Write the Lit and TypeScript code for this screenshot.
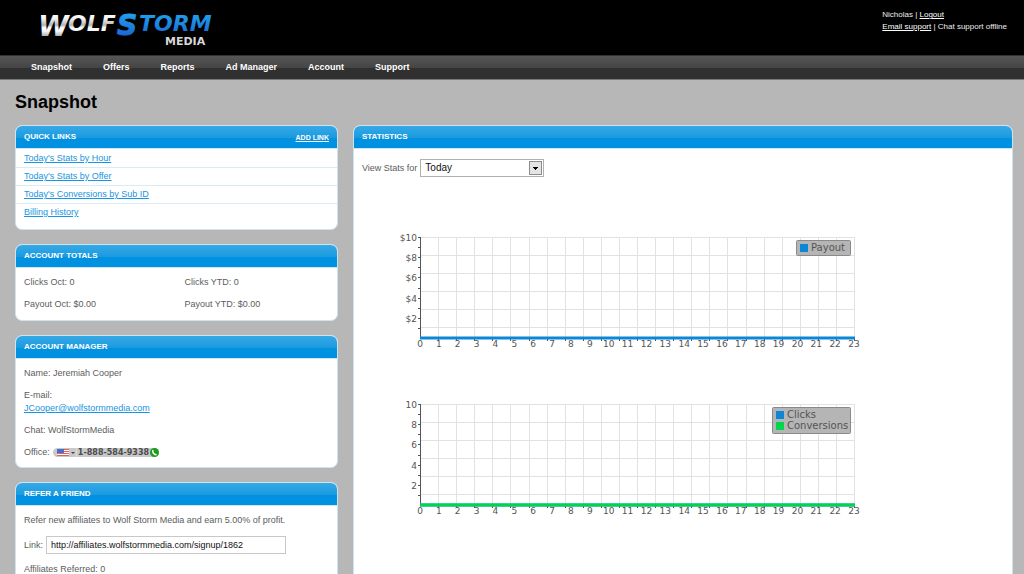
import { LitElement, html, svg, css } from "lit";
import { customElement, property } from "lit/decorators.js";

interface Series {
  name: string;
  color: string;
}

@customElement("brand-logo")
class BrandLogo extends LitElement {
  static styles = css`
    :host { display: block; }
    svg { display: block; }
    text { font-family: "DejaVu Sans", sans-serif; font-weight: bold; }
    .slant { font-style: italic; }
    .large { font-size: 28px; }
    .small { font-size: 22px; }
    .media { font-size: 11px; }
  `;

  render() {
    return html`
      <svg width="180" height="40" viewBox="0 0 180 40" role="img" aria-label="WolfStorm Media">
        <defs>
          <linearGradient id="silver" gradientUnits="userSpaceOnUse" x1="0" y1="5" x2="0" y2="28">
            <stop offset="0" stop-color="#ffffff" />
            <stop offset="0.2" stop-color="#f4f4f4" />
            <stop offset="0.48" stop-color="#b4b4b4" />
            <stop offset="0.6" stop-color="#ffffff" />
            <stop offset="0.75" stop-color="#f4f4f4" />
            <stop offset="1" stop-color="#a0a0a0" />
          </linearGradient>
          <linearGradient id="blue" gradientUnits="userSpaceOnUse" x1="0" y1="5" x2="0" y2="28">
            <stop offset="0" stop-color="#1fa0ee" />
            <stop offset="1" stop-color="#1b64d0" />
          </linearGradient>
        </defs>
        <text class="slant large" x="1" y="27" fill="url(#silver)">W</text>
        <text class="slant small" x="31" y="22" fill="url(#silver)">OLF</text>
        <text class="slant large" x="80" y="26" fill="url(#blue)" stroke="url(#blue)">S</text>
        <text class="slant small" x="102" y="22" fill="url(#blue)">TORM</text>
        <text class="media" x="128" y="36" fill="#d8d8d8">MEDIA</text>
      </svg>
    `;
  }
}

@customElement("panel-card")
class PanelCard extends LitElement {
  @property() heading = "";

  static styles = css`
    :host {
      display: block;
      box-sizing: border-box;
      border: 1px solid #cfe3ee;
      border-radius: 7px;
      background: #fff;
      overflow: hidden;
    }
    header {
      display: flex;
      align-items: center;
      justify-content: space-between;
      height: 22px;
      padding: 0 8px;
      border-bottom: 1px solid #cfe6f3;
      background: linear-gradient(#36a9e6 0, #1b9ae0 54%, #0091e0 55%, #0091e0 100%);
      color: #fff;
    }
    h2 { margin: 0; font-size: 8px; line-height: 12px; text-transform: uppercase; }
  `;

  render() {
    return html`
      <header><h2>${this.heading}</h2><slot name="action"></slot></header>
      <slot></slot>
    `;
  }
}

@customElement("line-chart")
class LineChart extends LitElement {
  @property() prefix = "";
  @property({ attribute: false }) series: Series[] = [];
  @property({ type: Number }) legendWidth = 54;

  static styles = css`
    :host { display: block; }
    svg { display: block; }
    text { font-family: "DejaVu Sans", Verdana, sans-serif; font-size: 9px; fill: #545454; }
    .name { font-size: 10px; }
    .grid { stroke: #e2e2e2; stroke-width: 1; }
    .axis { stroke: #545454; stroke-width: 1; }
    .line { stroke-width: 3; }
    .legend { fill: #b5b5b5; stroke: #8a8a8a; }
  `;

  render() {
    const left = 30;
    const top = 10;
    const width = 434;
    const height = 101;
    const bottom = top + height;
    const columns = Array.from({ length: 24 }, (_, i) => Math.round(left + (i + 1) * (width / 24)) + 0.5);
    const rows = Array.from({ length: 6 }, (_, i) => top + i * 18 + 0.5);
    const ticks = Array.from({ length: 10 }, (_, i) => Math.round(top + (i * height) / 10) + 0.5);
    const hours = Array.from({ length: 24 }, (_, i) => i);
    const legendHeight = this.series.length * 11 + 4;
    const legendLeft = left + width - 3 - this.legendWidth;
    return html`
      <svg width="480" height="130" viewBox="0 0 480 130" role="img" aria-label="Hourly chart">
        ${rows.map((y) => svg`<line class="grid" x1=${left} x2=${left + width} y1=${y} y2=${y} />`)}
        ${columns.map((x) => svg`<line class="grid" x1=${x} x2=${x} y1=${top} y2=${bottom} />`)}
        ${columns.map((x) => svg`<line class="axis" x1=${x} x2=${x} y1=${bottom} y2=${bottom + 3} />`)}
        <line class="axis" x1=${left + 0.5} x2=${left + 0.5} y1=${top} y2=${bottom} />
        ${ticks.map((y) => svg`<line class="axis" x1=${left - 2} x2=${left} y1=${y} y2=${y} />`)}
        ${[10, 8, 6, 4, 2].map(
          (v) => svg`<text text-anchor="end" x=${left - 3} y=${Math.round(bottom - (v * height) / 10) + 4}>${this.prefix}${v}</text>`
        )}
        ${hours.map(
          (h) => svg`<text text-anchor="middle" x=${left + (h * width) / 23} y=${bottom + 9}>${h}</text>`
        )}
        ${this.series.map(
          (s) => svg`<line class="line" stroke=${s.color} x1=${left} x2=${left + width + 1} y1=${bottom} y2=${bottom} />`
        )}
        <rect class="legend" x=${legendLeft + 0.5} y=${top + 3.5} width=${this.legendWidth - 1} height=${legendHeight} rx="1" />
        ${this.series.map(
          (s, i) => svg`
            <rect x=${legendLeft + 4} y=${top + 7 + i * 11} width="8" height="8" fill=${s.color} />
            <text class="name" x=${legendLeft + 15} y=${top + 14 + i * 11}>${s.name}</text>`
        )}
      </svg>
    `;
  }
}

@customElement("app-root")
class AppRoot extends LitElement {
  static styles = css`
    :host {
      display: block;
      height: 100vh;
      overflow: auto;
      scrollbar-width: none;
      background: #b7b7b7;
      color: #5c5c5c;
      font: 9px/13px "Liberation Sans", Arial, sans-serif;
    }
    a { color: #1795e0; }
    .top {
      display: flex;
      justify-content: space-between;
      height: 55px;
      box-sizing: border-box;
      padding: 9px 17px 0 37px;
      background: #000;
      color: #eee;
      font-size: 8px;
      line-height: 12px;
    }
    .top a, .add { color: #fff; }
    .user { margin: 0; }
    nav {
      display: flex;
      align-items: center;
      gap: 31px;
      height: 23px;
      padding: 0 31px;
      border-top: 1px solid #333;
      border-bottom: 1px solid #777;
      background: linear-gradient(#565656 0, #454545 50%, #303030 51%, #303030 100%);
    }
    nav a { color: #fff; font-weight: bold; text-decoration: none; }
    main { padding: 12px 11px 12px 15px; }
    h1 { margin: 0 0 12px; color: #000; font-size: 18px; line-height: 21px; }
    .columns { display: grid; grid-template-columns: 23fr 47fr; gap: 15px; }
    .side { display: flex; flex-direction: column; gap: 14px; }
    .add { font-size: 7px; font-weight: bold; }
    .links { margin: 0; padding: 1px 0 8px; list-style: none; }
    .links li { height: 17px; padding: 0 8px; line-height: 17px; }
    .links li + li { border-top: 1px solid #dcebf2; }
    .body { display: flex; flex-direction: column; gap: 9px; padding: 8px; }
    .body p { margin: 0; }
    .totals { display: grid; grid-template-columns: 1fr 1fr; column-gap: 16px; padding-bottom: 9px; }
    .office, .field { display: flex; align-items: center; gap: 3px; }
    .phone {
      display: flex;
      align-items: center;
      gap: 1px;
      height: 9px;
      padding: 0 0 0 3px;
      border: 0;
      border-radius: 5px;
      background: #c9c9c9;
      color: #4c4c4c;
      font: bold 8px/9px "DejaVu Sans", Verdana, sans-serif;
    }
    .phone svg { display: block; flex: none; }
    .link-box {
      box-sizing: border-box;
      width: 240px;
      height: 18px;
      padding: 0 4px;
      border: 1px solid #c8c8c8;
      color: #111;
      font: 9px/13px "Liberation Sans", Arial, sans-serif;
    }
    .filter { padding: 10px 8px 0; }
    .picker { display: grid; width: 124px; }
    .picker select, .picker svg { grid-area: 1 / 1; }
    .picker svg { align-self: center; justify-self: end; margin-right: 2px; pointer-events: none; }
    .picker select {
      appearance: none;
      box-sizing: border-box;
      height: 18px;
      padding: 0 4px;
      border: 1px solid #b0b0b0;
      border-radius: 0;
      background: #fff;
      color: #111;
      font: 10px/14px "Liberation Sans", Arial, sans-serif;
    }
    .charts { display: flex; flex-direction: column; gap: 37px; padding: 50px 0 20px 36px; }
  `;

  private menu = ["Snapshot", "Offers", "Reports", "Ad Manager", "Account", "Support"];
  private quickLinks = ["Today's Stats by Hour", "Today's Stats by Offer", "Today's Conversions by Sub ID", "Billing History"];
  private payout: Series[] = [{ name: "Payout", color: "#0c87d8" }];
  private traffic: Series[] = [
    { name: "Clicks", color: "#0c87d8" },
    { name: "Conversions", color: "#00d64c" },
  ];

  render() {
    return html`
      <header class="top">
        <brand-logo></brand-logo>
        <p class="user">
          Nicholas | <a href="#">Logout</a><br />
          <a href="#">Email support</a> | Chat support offline
        </p>
      </header>
      <nav>${this.menu.map((item) => html`<a href="#">${item}</a>`)}</nav>
      <main>
        <h1>Snapshot</h1>
        <div class="columns">
          <div class="side">
            <panel-card heading="Quick Links">
              <a class="add" slot="action" href="#">ADD LINK</a>
              <ul class="links">${this.quickLinks.map((l) => html`<li><a href="#">${l}</a></li>`)}</ul>
            </panel-card>
            <panel-card heading="Account Totals">
              <div class="body totals">
                <p>Clicks Oct: 0</p><p>Clicks YTD: 0</p>
                <p>Payout Oct: $0.00</p><p>Payout YTD: $0.00</p>
              </div>
            </panel-card>
            <panel-card heading="Account Manager">
              <div class="body">
                <p>Name: Jeremiah Cooper</p>
                <p>E-mail:<br /><a href="mailto:JCooper@wolfstormmedia.com">JCooper@wolfstormmedia.com</a></p>
                <p>Chat: WolfStormMedia</p>
                <div class="office">
                  <span>Office:</span>
                  <button class="phone" type="button">
                    <svg width="21" height="9" viewBox="0 0 21 9" aria-hidden="true">
                      <rect x="1" y="1" width="12" height="7" fill="#fff" />
                      <path d="M1 1.5h12M1 3.5h12M1 5.5h12M1 7.5h12" stroke="#e0605a" />
                      <rect x="1" y="1" width="7" height="4" fill="#3f6fd0" />
                      <path d="M15 4h4l-2 2z" fill="#444" />
                      <path d="M20.5 0v9" stroke="#ddd" />
                    </svg>
                    <span>1-888-584-9338</span>
                    <svg width="9" height="9" viewBox="0 0 9 9" aria-hidden="true">
                      <circle cx="4.5" cy="4.5" r="4.5" fill="#1d9c1d" />
                      <path d="M3 2C2 4 4 7 6.600 6.600" fill="none" stroke="#fff" stroke-width="1.500" />
                    </svg>
                  </button>
                </div>
              </div>
            </panel-card>
            <panel-card heading="Refer a Friend">
              <div class="body">
                <p>Refer new affiliates to Wolf Storm Media and earn 5.00% of profit.</p>
                <div class="field">
                  <label for="link">Link:</label>
                  <input class="link-box" id="link" type="text" value="http://affiliates.wolfstormmedia.com/signup/1862" />
                </div>
                <p>Affiliates Referred: 0</p>
              </div>
            </panel-card>
          </div>
          <panel-card heading="Statistics">
            <div class="field filter">
              <label for="range">View Stats for</label>
              <div class="picker">
                <select id="range"><option>Today</option></select>
                <svg width="13" height="14" viewBox="0 0 13 14" aria-hidden="true">
                  <rect x="0.5" y="0.5" width="12" height="13" fill="#e4e4e4" stroke="#8c8c8c" />
                  <path d="M4 6h5v1h-1v1h-1v1h-1v-1h-1v-1h-1z" fill="#000" />
                </svg>
              </div>
            </div>
            <div class="charts">
              <line-chart prefix="$" .series=${this.payout} .legendWidth=${55}></line-chart>
              <line-chart .series=${this.traffic} .legendWidth=${79}></line-chart>
            </div>
          </panel-card>
        </div>
      </main>
    `;
  }
}
